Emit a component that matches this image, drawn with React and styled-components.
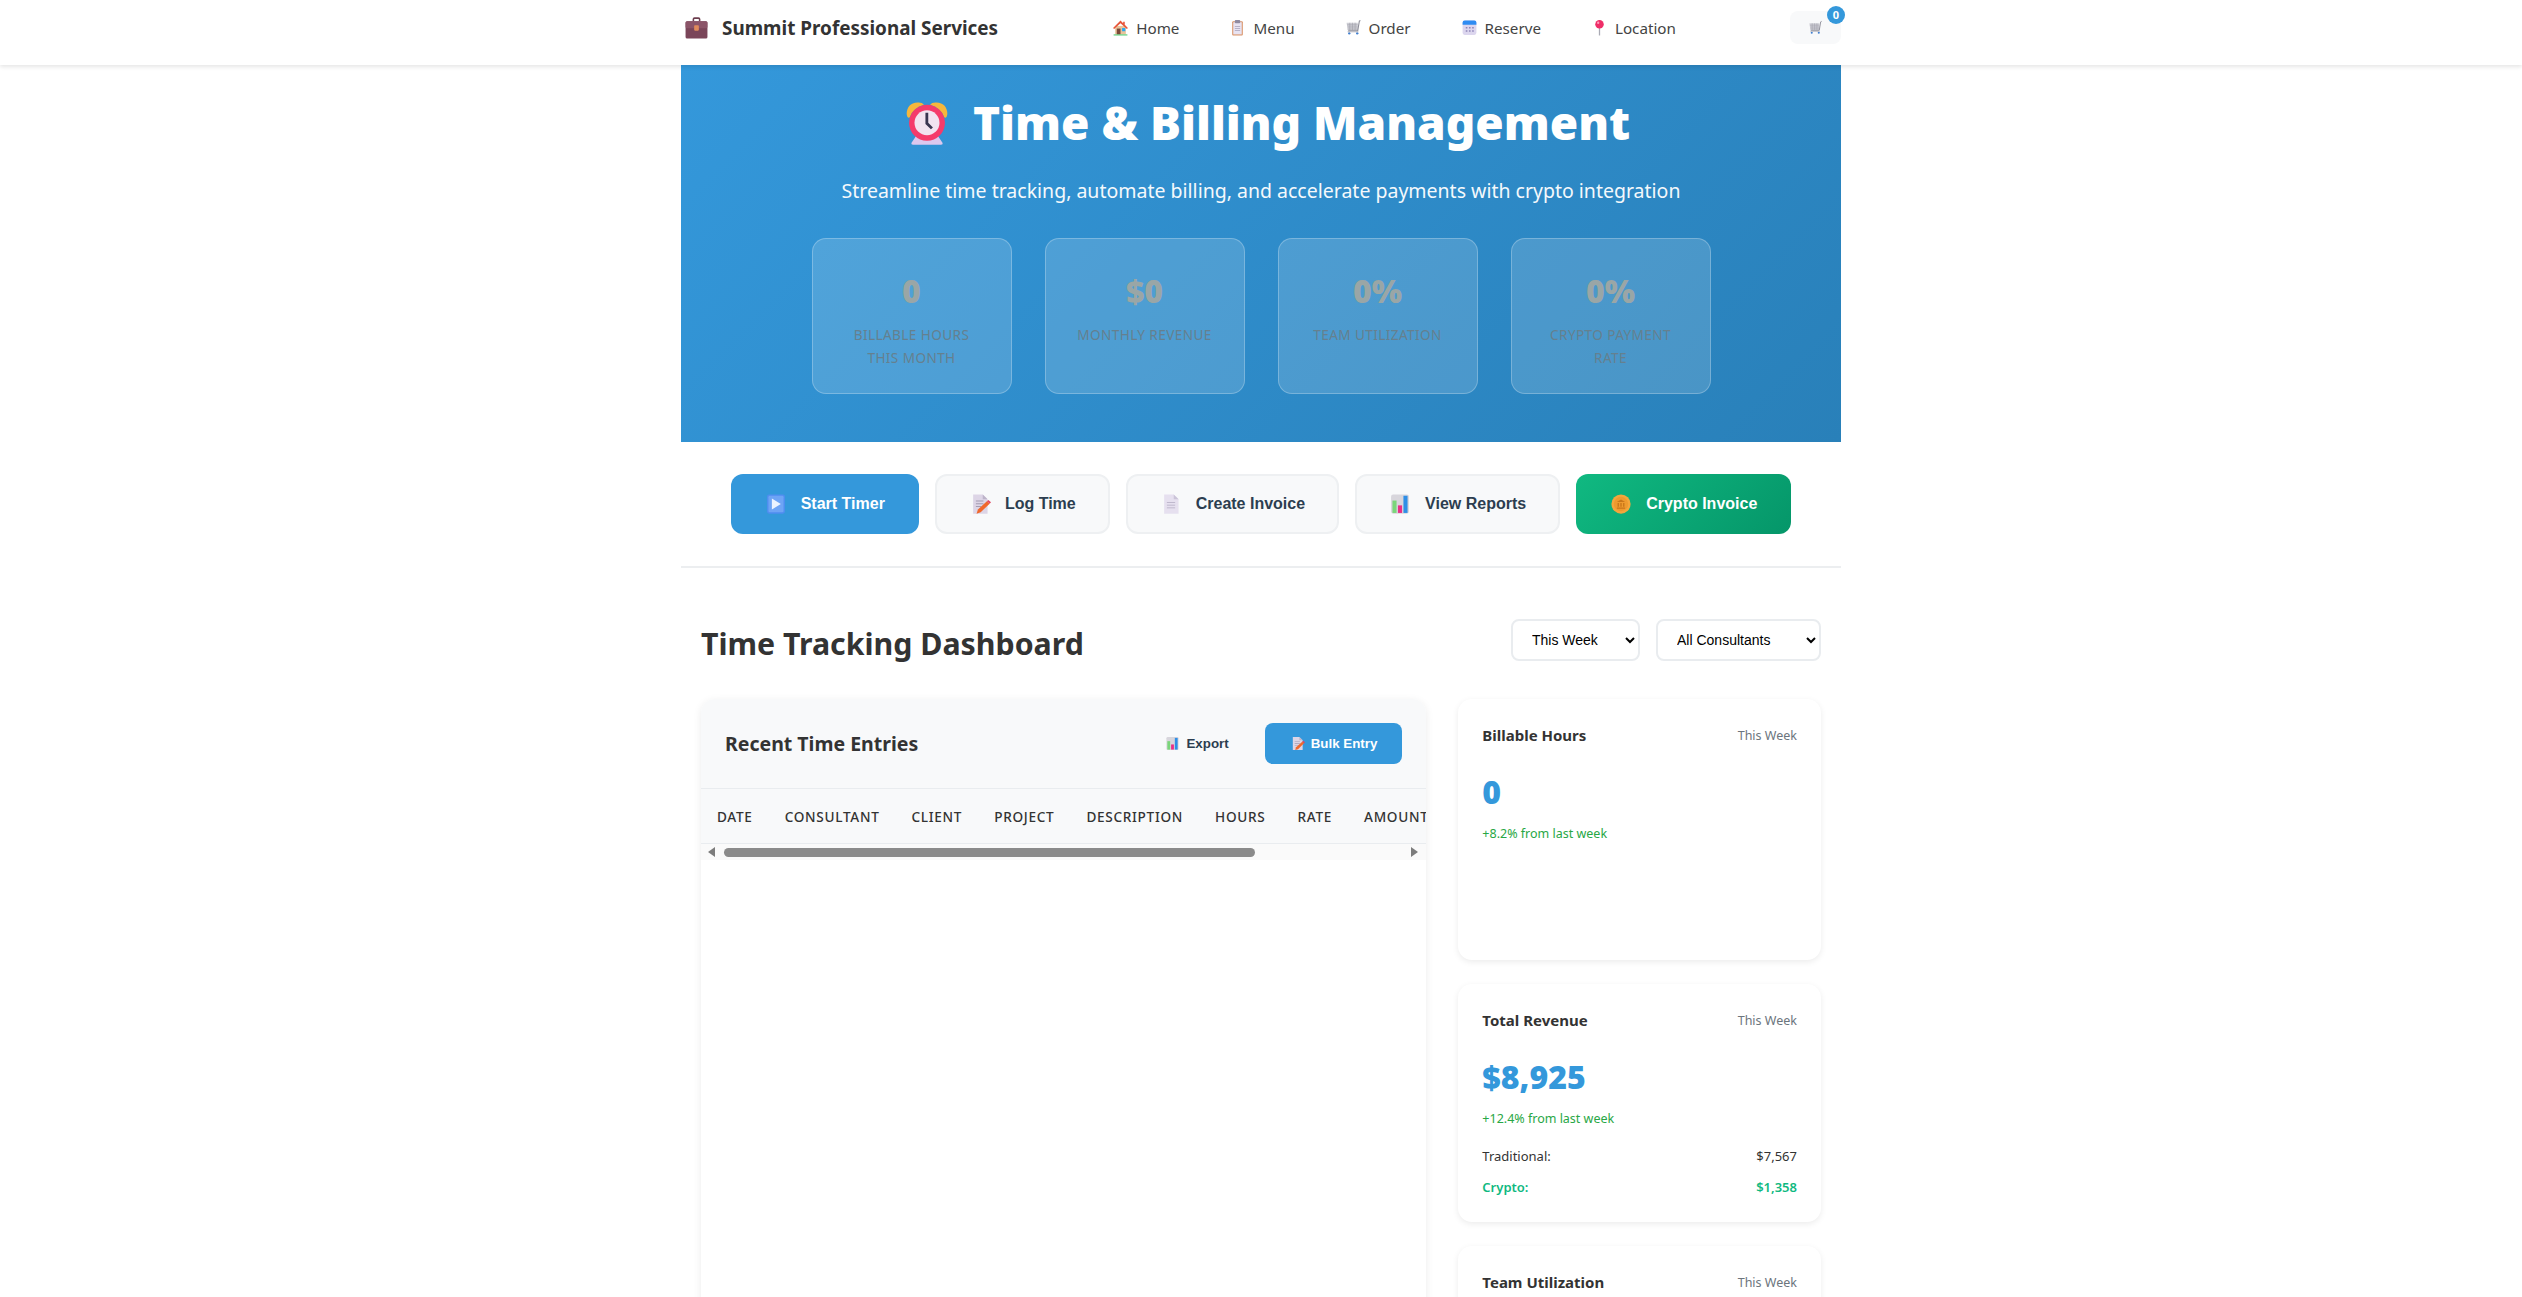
import React from "react";
import styled, { createGlobalStyle } from "styled-components";

const GlobalStyle = createGlobalStyle`
  body {
    margin: 0;
    background: #fff;
    color: #2c3e50;
    font-family: "Noto Sans", "Open Sans", sans-serif;
  }
`;

const Emoji = styled.svg`
  display: block;
  flex: none;
  width: ${(p) => p.$size || 20}px;
  height: ${(p) => p.$size || 20}px;
`;

const Icon = ({ name, size }) => (
  <Emoji viewBox="0 0 32 32" $size={size} aria-hidden="true">
    {ICONS[name]}
  </Emoji>
);

const ICONS = {
  briefcase: (
    <>
      <path d="M11 8V5.500Q11 3 13.500 3h5Q21 3 21 5.500V8h-2V5.500q0-.5-.5-.5h-5q-.5 0-.5.5V8z" fill="#6d3f4f" />
      <rect x="2" y="8" width="28" height="22" rx="2" fill="#7a4559" />
      <rect x="2" y="8" width="28" height="9" rx="2" fill="#8b5468" />
      <rect x="13" y="13" width="6" height="7" rx="1" fill="#e08a5b" />
    </>
  ),
  house: (
    <>
      <rect x="6" y="13" width="20" height="16" fill="#e9c39a" />
      <path d="M16 3 2 17l2 2L16 8l12 11 2-2-6-6V5h-3v3z" fill="#e8553a" />
      <rect x="9" y="18" width="7" height="11" fill="#7b4a3a" />
      <rect x="19" y="17" width="6" height="6" fill="#29a8f0" />
      <rect x="3" y="29" width="26" height="2" fill="#4cc96e" />
    </>
  ),
  clipboard: (
    <>
      <rect x="6" y="4" width="20" height="27" rx="2" fill="#d99368" />
      <rect x="8" y="6" width="16" height="23" fill="#e8e3f2" />
      <rect x="11" y="2" width="10" height="6" rx="1.500" fill="#8f8aa0" />
      <path d="M11 13h10v1.500H11zM11 17h10v1.500H11zM11 21h10v1.500H11z" fill="#a7a3ba" />
    </>
  ),
  cart: (
    <>
      <path d="M3 7h21v14H5z" fill="#cfcfd6" />
      <path d="M4 11h20M5 15h19M5 19h19M9 7v14M14 7v14M19 7v14" stroke="#9a9aa5" strokeWidth="1" fill="none" />
      <path d="M29 3l-2 1-3 18H6" stroke="#8d8d98" strokeWidth="2" fill="none" />
      <circle cx="8" cy="27" r="2.200" fill="#3f7fd0" />
      <circle cx="23" cy="27" r="2.200" fill="#3f7fd0" />
      <path d="M5 24h20" stroke="#b5b5be" strokeWidth="2" />
    </>
  ),
  calendar: (
    <>
      <rect x="3" y="3" width="26" height="27" rx="4" fill="#dcd6ee" />
      <path d="M3 11V7q0-4 4-4h18q4 0 4 4v4z" fill="#2f8cf2" />
      <path d="M9 15h3v3H9zM15 15h3v3h-3zM21 15h3v3h-3zM9 21h3v3H9zM15 21h3v3h-3zM21 21h3v3h-3z" fill="#8f86b8" />
    </>
  ),
  pin: (
    <>
      <rect x="14.800" y="14" width="2.400" height="17" fill="#a9aab4" />
      <circle cx="16" cy="10" r="8" fill="#ef2e68" />
      <circle cx="13.500" cy="7" r="2.200" fill="#ff9ab8" />
    </>
  ),
  play: (
    <>
      <rect x="3" y="2" width="26" height="28" rx="3" fill="#4f8df0" />
      <rect x="5" y="4" width="22" height="24" rx="2" fill="#6ea4f5" />
      <path d="M10 8v16l13-8z" fill="#ecf3ff" />
    </>
  ),
  memo: (
    <>
      <path d="M6 2h14l7 7v21H6z" fill="#ddd5e6" />
      <path d="M20 2l7 7h-7z" fill="#bdb4c9" />
      <path d="M10 11h11v1.500H10zM10 15h11v1.500H10zM10 19h8v1.500h-8z" fill="#a49cb2" />
      <path d="M11 30l2-6L26 12l4 3.500L17 28z" fill="#f0682c" />
      <path d="M26 12l2-2 4 3.500-2 2z" fill="#e0455f" />
    </>
  ),
  doc: (
    <>
      <path d="M6 2h14l7 7v21H6z" fill="#e6e0ef" />
      <path d="M20 2l7 7h-7z" fill="#cbc4d8" />
      <path d="M10 13h12v1.300H10zM10 17h12v1.300H10zM10 21h12v1.300H10z" fill="#b2aac2" />
    </>
  ),
  chart: (
    <>
      <rect x="3" y="2" width="26" height="28" rx="3" fill="#d8d6dc" />
      <rect x="5" y="11" width="6" height="18" fill="#7bd67a" />
      <rect x="13" y="18" width="6" height="11" fill="#ea2f86" />
      <rect x="21" y="4" width="6" height="25" fill="#2f8fe6" />
    </>
  ),
  coin: (
    <>
      <circle cx="16" cy="16" r="14" fill="#f4a63c" />
      <circle cx="16" cy="16" r="10.500" fill="#ee9a2e" />
      <path d="M10 13l6-3.500 6 3.500zM11 14.500h2V20h-2zM15 14.500h2V20h-2zM19 14.500h2V20h-2zM10 21h12v2H10z" fill="#c9761a" />
    </>
  ),
  clock: (
    <>
      <path d="M3 11Q3 4 10 3.500q3-.2 4 1.500Q7 7 5 13q-1.500 1-2-2z" fill="#f6b73c" />
      <path d="M29 11q0-7-7-7.500-3-.2-4 1.500 7 2 9 8 1.500 1 2-2z" fill="#f6b73c" />
      <path d="M9 25h14l3 4.500q.3 1-1 1H7q-1.300 0-1-1z" fill="#dcc8ee" />
      <circle cx="16" cy="16.500" r="11.500" fill="#f53b6b" />
      <circle cx="16" cy="16.500" r="8" fill="#f2e3f0" />
      <path d="M15 10h1.800v6.500l3 3-1.300 1.200L15 17.300z" fill="#3a3550" />
    </>
  ),
};

const Header = styled.header`
  position: relative;
  z-index: 2;
  height: 65px;
  background: #fff;
  box-shadow: 0 2px 4px rgba(0, 0, 0, 0.1);
`;

const HeaderInner = styled.div`
  box-sizing: border-box;
  width: 1160px;
  height: 100%;
  margin: 0 auto;
  padding: 0 0 10px 3px;
  display: flex;
  align-items: center;
  justify-content: space-between;
`;

const Brand = styled.div`
  display: flex;
  align-items: center;
  gap: 13px;
  font-size: 18.9px;
  font-weight: 700;
  color: #333;
`;

const Nav = styled.nav`
  display: flex;
  gap: 30px;
`;

const NavLink = styled.a`
  display: flex;
  align-items: center;
  gap: 7px;
  padding: 8px 10px;
  font-size: 15.2px;
  color: #444;
`;

const CartButton = styled.div`
  position: relative;
  width: 51px;
  height: 33px;
  border-radius: 8px;
  background: #f8f9fa;
  display: flex;
  align-items: center;
  justify-content: center;
`;

const CartBadge = styled.span`
  position: absolute;
  top: -5px;
  right: -4px;
  width: 18px;
  height: 18px;
  border-radius: 50%;
  background: #3498db;
  color: #fff;
  font-size: 11px;
  font-weight: 700;
  line-height: 18px;
  text-align: center;
`;

const Page = styled.main`
  width: 1160px;
  margin: 0 auto;
`;

const Hero = styled.section`
  box-sizing: border-box;
  height: 377px;
  padding-top: 25px;
  background: linear-gradient(135deg, #3498db 0%, #2980b9 100%);
  color: #fff;
  text-align: center;
`;

const HeroTitle = styled.h1`
  margin: 0;
  padding-left: 10px;
  display: flex;
  align-items: center;
  justify-content: center;
  gap: 21px;
  font-size: 46px;
  font-weight: 900;
  line-height: 64px;
`;

const HeroText = styled.p`
  margin: 22px 0 0;
  font-size: 19.5px;
  line-height: 30px;
  font-weight: 400;
  opacity: 0.95;
`;

const StatRow = styled.div`
  margin-top: 32px;
  display: flex;
  justify-content: center;
  gap: 33px;
`;

const StatCard = styled.div`
  box-sizing: border-box;
  width: 200px;
  height: 156px;
  padding: 32px 24px 0;
  border: 1px solid rgba(255, 255, 255, 0.25);
  border-radius: 14px;
  background: rgba(255, 255, 255, 0.15);
`;

const StatValue = styled.div`
  font-size: 32px;
  font-weight: 900;
  line-height: 40px;
  color: #9aa6a6;
`;

const StatLabel = styled.div`
  margin-top: 12px;
  font-size: 13.6px;
  line-height: 23px;
  letter-spacing: 0.4px;
  text-transform: uppercase;
  color: #65808f;
`;

const ActionBar = styled.section`
  display: flex;
  justify-content: center;
  gap: 16px;
  padding: 32px 0;
  border-bottom: 2px solid #eceef0;
`;

const ActionButton = styled.button`
  box-sizing: border-box;
  height: 60px;
  padding: 0 32px;
  display: flex;
  align-items: center;
  gap: 14px;
  border-radius: 12px;
  border: ${(p) => (p.$variant === "plain" ? "2px solid #eef0f2" : "0")};
  background: ${(p) =>
    p.$variant === "primary"
      ? "#3498db"
      : p.$variant === "crypto"
        ? "linear-gradient(135deg, #10b981, #059669)"
        : "#f8f9fa"};
  margin: 0;
  color: ${(p) => (p.$variant === "plain" ? "#2c3e50" : "#fff")};
  font-family: "Liberation Sans", Arial, sans-serif;
  font-size: 16px;
  font-weight: 700;
  ${(p) => (p.$variant === "plain" ? "" : "padding: 0 34px;")}
`;

const Main = styled.section`
  padding: 45px 20px 40px;
`;

const TitleRow = styled.div`
  height: 54px;
  margin-bottom: 32px;
  display: flex;
  align-items: center;
  justify-content: space-between;
`;

const PageTitle = styled.h2`
  margin: 6px 0 0;
  font-size: 30.3px;
  font-weight: 700;
  color: #333;
`;

const Filters = styled.div`
  display: flex;
  gap: 16px;
`;

const Select = styled.select`
  height: 42px;
  width: ${(p) => p.$width}px;
  padding: 0 0 0 15px;
  border: 2px solid #e9ecef;
  border-radius: 8px;
  background: #fff;
  font-family: "Liberation Sans", Arial, sans-serif;
  font-size: 14px;
  color: #000;
`;

const Columns = styled.div`
  display: grid;
  grid-template-columns: 2fr 1fr;
  gap: 32px;
`;

const TablePanel = styled.div`
  min-height: 900px;
  border-radius: 14px;
  background: #fff;
  box-shadow: 0 2px 8px rgba(0, 0, 0, 0.08);
  overflow: hidden;
`;

const TableHead = styled.div`
  height: 89px;
  padding: 0 24px;
  display: flex;
  align-items: center;
  justify-content: space-between;
  background: #f8f9fa;
  border-bottom: 1px solid #e9ecef;
`;

const TableTitle = styled.h3`
  margin: 0;
  font-size: 19.5px;
  font-weight: 700;
  color: #333;
`;

const TableActions = styled.div`
  display: flex;
  align-items: center;
  gap: 16px;
`;

const SmallButton = styled.button`
  box-sizing: border-box;
  height: 41px;
  padding: 0 ${(p) => (p.$primary ? 25 : 20)}px;
  display: flex;
  align-items: center;
  gap: 6px;
  border: 0;
  border-radius: 8px;
  background: ${(p) => (p.$primary ? "#3498db" : "transparent")};
  color: ${(p) => (p.$primary ? "#fff" : "#2c3e50")};
  font-family: "Liberation Sans", Arial, sans-serif;
  font-size: 13.33px;
  font-weight: 700;
`;

const TableClip = styled.div`
  overflow: hidden;
`;

const Table = styled.table`
  width: max-content;
  border-collapse: collapse;
`;

const Th = styled.th`
  height: 54px;
  padding: 0 16px;
  background: #f8f9fa;
  border-bottom: 1px solid #e9ecef;
  font-size: 13.6px;
  font-weight: 500;
  letter-spacing: 0.7px;
  text-align: left;
  text-transform: uppercase;
  white-space: nowrap;
  color: #333;
`;

const ScrollTrack = styled.div`
  height: 16px;
  padding: 0 8px 0 7px;
  display: flex;
  align-items: center;
  justify-content: space-between;
  background: #fafafa;
`;

const ScrollArrow = styled.span`
  width: 0;
  height: 0;
  border-top: 5px solid transparent;
  border-bottom: 5px solid transparent;
  border-${(p) => (p.$right ? "left" : "right")}: 7px solid #7c7c7c;
`;

const ScrollThumb = styled.span`
  width: 531px;
  height: 9px;
  margin: 0 auto 0 9px;
  border-radius: 5px;
  background: #8b8b8b;
`;

const SideColumn = styled.aside`
  display: flex;
  flex-direction: column;
  gap: 24px;
`;

const MetricCard = styled.div`
  box-sizing: border-box;
  min-height: ${(p) => p.$minHeight || 0}px;
  padding: 26px 24px 25px;
  border-radius: 14px;
  background: #fff;
  box-shadow: 0 2px 6px rgba(0, 0, 0, 0.08);
`;

const MetricHead = styled.div`
  display: flex;
  justify-content: space-between;
  align-items: center;
`;

const MetricTitle = styled.h4`
  margin: 0;
  font-size: 15px;
  font-weight: 700;
  color: #333;
`;

const MetricPeriod = styled.span`
  font-size: 12.5px;
  color: #6c757d;
`;

const MetricValue = styled.div`
  margin-top: 25px;
  font-size: 32px;
  font-weight: 900;
  line-height: 44px;
  color: #3498db;
`;

const MetricChange = styled.div`
  margin-top: 11px;
  font-size: 12.5px;
  line-height: 18px;
  color: #28a745;
`;

const BreakdownRow = styled.div`
  display: flex;
  justify-content: space-between;
  margin-top: ${(p) => (p.$first ? 19 : 12)}px;
  font-size: 13px;
  line-height: 19px;
  font-weight: ${(p) => (p.$crypto ? 600 : 400)};
  color: ${(p) => (p.$crypto ? "#10b981" : "#333")};
`;

const NAV = [
  ["house", "Home"],
  ["clipboard", "Menu"],
  ["cart", "Order"],
  ["calendar", "Reserve"],
  ["pin", "Location"],
];

const STATS = [
  ["0", "Billable Hours This Month"],
  ["$0", "Monthly Revenue"],
  ["0%", "Team Utilization"],
  ["0%", "Crypto Payment Rate"],
];

const ACTIONS = [
  ["play", "Start Timer", "primary"],
  ["memo", "Log Time", "plain"],
  ["doc", "Create Invoice", "plain"],
  ["chart", "View Reports", "plain"],
  ["coin", "Crypto Invoice", "crypto"],
];

const COLUMNS = ["Date", "Consultant", "Client", "Project", "Description", "Hours", "Rate", "Amount", "Status", "Actions"];

export default function App() {
  return (
    <>
      <GlobalStyle />
      <Header>
        <HeaderInner>
          <Brand>
            <Icon name="briefcase" size={25} />
            Summit Professional Services
          </Brand>
          <Nav>
            {NAV.map(([icon, label]) => (
              <NavLink key={label}>
                <Icon name={icon} size={17} />
                {label}
              </NavLink>
            ))}
          </Nav>
          <CartButton>
            <Icon name="cart" size={15} />
            <CartBadge>0</CartBadge>
          </CartButton>
        </HeaderInner>
      </Header>
      <Page>
        <Hero>
          <HeroTitle>
            <Icon name="clock" size={50} />
            Time &amp; Billing Management
          </HeroTitle>
          <HeroText>Streamline time tracking, automate billing, and accelerate payments with crypto integration</HeroText>
          <StatRow>
            {STATS.map(([value, label]) => (
              <StatCard key={label}>
                <StatValue>{value}</StatValue>
                <StatLabel>{label}</StatLabel>
              </StatCard>
            ))}
          </StatRow>
        </Hero>
        <ActionBar>
          {ACTIONS.map(([icon, label, variant]) => (
            <ActionButton key={label} $variant={variant}>
              <Icon name={icon} size={22} />
              {label}
            </ActionButton>
          ))}
        </ActionBar>
        <Main>
          <TitleRow>
            <PageTitle>Time Tracking Dashboard</PageTitle>
            <Filters>
              <Select $width={129}>
                <option>This Week</option>
                <option>This Month</option>
              </Select>
              <Select $width={165}>
                <option>All Consultants</option>
              </Select>
            </Filters>
          </TitleRow>
          <Columns>
            <TablePanel>
              <TableHead>
                <TableTitle>Recent Time Entries</TableTitle>
                <TableActions>
                  <SmallButton>
                    <Icon name="chart" size={15} />
                    Export
                  </SmallButton>
                  <SmallButton $primary>
                    <Icon name="memo" size={15} />
                    Bulk Entry
                  </SmallButton>
                </TableActions>
              </TableHead>
              <TableClip>
                <Table>
                  <thead>
                    <tr>
                      {COLUMNS.map((col) => (
                        <Th key={col}>{col}</Th>
                      ))}
                    </tr>
                  </thead>
                </Table>
              </TableClip>
              <ScrollTrack>
                <ScrollArrow />
                <ScrollThumb />
                <ScrollArrow $right />
              </ScrollTrack>
            </TablePanel>
            <SideColumn>
              <MetricCard $minHeight={261}>
                <MetricHead>
                  <MetricTitle>Billable Hours</MetricTitle>
                  <MetricPeriod>This Week</MetricPeriod>
                </MetricHead>
                <MetricValue>0</MetricValue>
                <MetricChange>+8.2% from last week</MetricChange>
              </MetricCard>
              <MetricCard>
                <MetricHead>
                  <MetricTitle>Total Revenue</MetricTitle>
                  <MetricPeriod>This Week</MetricPeriod>
                </MetricHead>
                <MetricValue>$8,925</MetricValue>
                <MetricChange>+12.4% from last week</MetricChange>
                <BreakdownRow $first>
                  <span>Traditional:</span>
                  <span>$7,567</span>
                </BreakdownRow>
                <BreakdownRow $crypto>
                  <span>Crypto:</span>
                  <span>$1,358</span>
                </BreakdownRow>
              </MetricCard>
              <MetricCard $minHeight={240}>
                <MetricHead>
                  <MetricTitle>Team Utilization</MetricTitle>
                  <MetricPeriod>This Week</MetricPeriod>
                </MetricHead>
              </MetricCard>
            </SideColumn>
          </Columns>
        </Main>
      </Page>
    </>
  );
}
